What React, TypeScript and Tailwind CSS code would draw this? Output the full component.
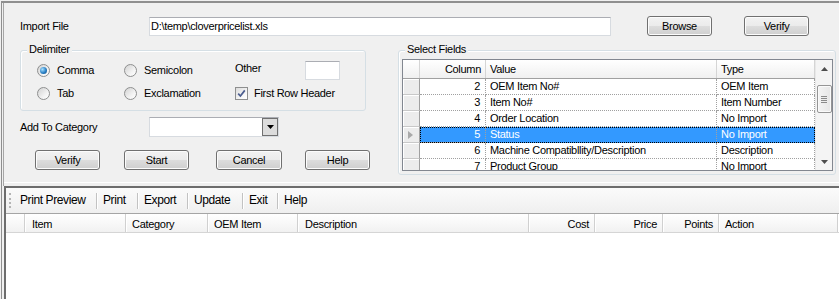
import React from "react";

type FieldRow = { column: number; value: string; type: string; selected?: boolean };

const fieldRows: FieldRow[] = [
  { column: 2, value: "OEM Item No#", type: "OEM Item" },
  { column: 3, value: "Item No#", type: "Item Number" },
  { column: 4, value: "Order Location", type: "No Import" },
  { column: 5, value: "Status", type: "No Import", selected: true },
  { column: 6, value: "Machine Compatibllity/Description", type: "Description" },
  { column: 7, value: "Product Group", type: "No Import" },
];

const toolbarItems = [
  { label: "Print Preview", className: "w-[76px]" },
  { label: "Print", className: "w-[40px] pl-[6px]" },
  { label: "Export", className: "w-[49px] pl-[6px]" },
  { label: "Update", className: "w-[54px] pl-[6px]" },
  { label: "Exit", className: "w-[34px] pl-[6px]" },
  { label: "Help", className: "pl-[6px]" },
];

const itemColumns = [
  { label: "", className: "w-[20px]" },
  { label: "Item", className: "w-[101px] pl-[6px]" },
  { label: "Category", className: "w-[82px] pl-[5px]" },
  { label: "OEM Item", className: "w-[90px] pl-[5px]" },
  { label: "Description", className: "w-[231px] pl-[6px]" },
  { label: "Cost", className: "w-[66px] justify-end pr-[7px]" },
  { label: "Price", className: "w-[68px] justify-end pr-[7px]" },
  { label: "Points", className: "w-[56px] justify-end pr-[7px]" },
  { label: "Action", className: "flex-1 pl-[5px]" },
];

function WinButton({ label, className = "" }: { label: string; className?: string }) {
  return (
    <button
      className={`flex h-[20px] shrink-0 items-center justify-center rounded-[3px] border border-[#707070] bg-[linear-gradient(#f2f2f2,#ebebeb_50%,#dddddd_50%,#cfcfcf)] shadow-[inset_0_0_0_1px_#fcfcfc] text-black ${className}`}
    >
      {label}
    </button>
  );
}

function Radio({ checked }: { checked?: boolean }) {
  return (
    <span className="flex h-[13px] w-[13px] shrink-0 items-center justify-center rounded-full border border-[#8e8f8f] bg-[linear-gradient(135deg,#d2d2d2,#f4f4f4_65%,#ffffff)]">
      {checked && (
        <span className="h-[7px] w-[7px] rounded-full bg-[radial-gradient(circle_at_35%_35%,#a6e0ff,#2a7fc4_55%,#0b4a80)]" />
      )}
    </span>
  );
}

function Checkbox() {
  return (
    <span className="flex h-[13px] w-[13px] shrink-0 items-center justify-center border border-[#8e8f8f] bg-[linear-gradient(135deg,#dcdcdc,#f8f8f8_70%,#ffffff)]">
      <svg width="9" height="9" viewBox="0 0 9 9">
        <path d="M1.2 4.6 L3.4 7 L7.8 1.4" fill="none" stroke="#4b5d8f" strokeWidth="1.7" />
      </svg>
    </span>
  );
}

function GroupBox({
  title,
  className = "",
  children,
}: {
  title: string;
  className?: string;
  children: React.ReactNode;
}) {
  return (
    <div className={`relative shrink-0 rounded-[3px] border border-[#d5dfe5] shadow-[inset_1px_1px_0_#ffffff] ${className}`}>
      <span className="absolute -top-[8px] left-[6px] bg-[#f0f0f0] px-[2px] leading-[13px]">{title}</span>
      {children}
    </div>
  );
}

function SelectFieldsGrid() {
  const headerCell =
    "flex h-full items-center bg-[linear-gradient(#ffffff,#f0f0f0)] shadow-[inset_-1px_0_0_#d5d5d5]";
  return (
    <div className="flex h-[112px] w-[431px] border border-[#828790] bg-white">
      <div className="w-[412px] overflow-hidden">
        <div className="flex h-[19px] border-b border-[#a0a0a0]">
          <div className={`${headerCell} w-[17px]`} />
          <div className={`${headerCell} w-[66px] justify-end pr-[5px]`}>Column</div>
          <div className={`${headerCell} w-[231px] pl-[4px]`}>Value</div>
          <div className={`${headerCell} w-[98px] pl-[4px]`}>Type</div>
        </div>
        {fieldRows.map((r) => (
          <div key={r.column} className="flex h-[16px]">
            <div className="flex w-[17px] items-center border-r border-b border-r-[#a0a0a0] border-b-[#c8c8c8] bg-[#ececec] pl-[5px] shadow-[inset_1px_1px_0_#ffffff]">
              {r.selected && (
                <svg width="5" height="8" viewBox="0 0 5 8">
                  <path d="M0 0 L5 4 L0 8 Z" fill="#a9a9a9" />
                </svg>
              )}
            </div>
            <div
              className={`flex ${
                r.selected
                  ? "bg-[#3399ff] text-white outline-1 -outline-offset-1 outline-dotted outline-black"
                  : ""
              }`}
            >
              <div className="flex w-[66px] items-center justify-end border-r border-b border-dotted border-[#a0a0a0] pr-[5px]">
                {r.column}
              </div>
              <div className="flex w-[231px] items-center border-r border-b border-dotted border-[#a0a0a0] pl-[4px] whitespace-nowrap">
                {r.value}
              </div>
              <div className="flex w-[98px] items-center border-r border-b border-dotted border-[#a0a0a0] pl-[4px] whitespace-nowrap">
                {r.type}
              </div>
            </div>
          </div>
        ))}
      </div>
      <div className="flex w-[17px] flex-col items-center border-l border-[#e8e8e8] bg-[#f4f4f4]">
        <div className="flex h-[17px] items-center">
          <svg width="7" height="4" viewBox="0 0 7 4">
            <path d="M0 4 L3.5 0 L7 4 Z" fill="#4d4d4d" />
          </svg>
        </div>
        <div className="mt-[8px] flex h-[28px] w-[15px] flex-col items-center justify-center gap-[1px] rounded-[2px] border border-[#959595] bg-[linear-gradient(90deg,#f4f4f4,#e6e6e6)] shadow-[inset_0_0_0_1px_#fafafa]">
          <span className="h-px w-[6px] bg-[#8a8a8a]" />
          <span className="h-px w-[6px] bg-[#8a8a8a]" />
          <span className="h-px w-[6px] bg-[#8a8a8a]" />
          <span className="h-px w-[6px] bg-[#8a8a8a]" />
        </div>
        <div className="mt-auto flex h-[17px] items-center">
          <svg width="7" height="4" viewBox="0 0 7 4">
            <path d="M0 0 L7 0 L3.5 4 Z" fill="#4d4d4d" />
          </svg>
        </div>
      </div>
    </div>
  );
}

export default function App() {
  return (
    <div className="flex h-[299px] w-[839px] flex-col overflow-hidden bg-[#f0f0f0] pt-px pl-px font-['Liberation_Sans',Arial,sans-serif] text-[11px] leading-[13px] tracking-[-0.3px] text-black">
      <div className="flex flex-1 flex-col border-t-2 border-l border-[#8f8f8f]">
        {/* import form */}
        <div className="ml-px flex h-[183px] flex-col border-l border-[#a6a6a6] pt-[13px]">
          <div className="flex items-start pl-[16px]">
            <span className="flex h-[20px] w-[129px] shrink-0 items-center">Import File</span>
            <div className="mt-px flex h-[19px] w-[462px] shrink-0 items-center border border-[#d7dbe0] border-t-[#abadb3] bg-white pl-[1px]">
              D:\temp\cloverpricelist.xls
            </div>
            <WinButton label="Browse" className="ml-[36px] w-[65px]" />
            <WinButton label="Verify" className="ml-[32px] w-[65px]" />
          </div>

          <div className="mt-[14px] flex items-start pl-[16px]">
            <div className="flex w-[346px] shrink-0 flex-col">
              <GroupBox title="Delimiter" className="h-[61px] w-[346px] pt-[9px] pl-[16px]">
                <div className="grid grid-cols-[87px_111px_1fr] grid-rows-[20px_20px] gap-y-[3px]">
                  <label className="flex items-center gap-[7px]">
                    <Radio checked />
                    Comma
                  </label>
                  <label className="flex items-center gap-[7px]">
                    <Radio />
                    Semicolon
                  </label>
                  <div className="flex items-center">
                    <span className="mb-[3px] w-[70px]">Other</span>
                    <div className="h-[19px] w-[35px] border border-[#d7dbe0] border-t-[#abadb3] bg-white" />
                  </div>
                  <label className="flex items-center gap-[7px]">
                    <Radio />
                    Tab
                  </label>
                  <label className="flex items-center gap-[7px]">
                    <Radio />
                    Exclamation
                  </label>
                  <label className="flex items-center gap-[6px]">
                    <Checkbox />
                    First Row Header
                  </label>
                </div>
              </GroupBox>

              <div className="mt-[6px] flex h-[20px] items-center">
                <span className="w-[129px] shrink-0">Add To Category</span>
                <div className="flex h-[20px] w-[130px] shrink-0 justify-end border border-[#d7dbe0] border-t-[#abadb3] bg-white">
                  <div className="flex w-[16px] items-center justify-center border border-[#707070] bg-[#dcdcdc]">
                    <svg width="7" height="4" viewBox="0 0 7 4">
                      <path d="M0 0 L7 0 L3.5 4 Z" fill="#000000" />
                    </svg>
                  </div>
                </div>
              </div>

              <div className="mt-[13px] flex pl-[15px]">
                <WinButton label="Verify" className="w-[65px]" />
                <WinButton label="Start" className="ml-[24px] w-[65px]" />
                <WinButton label="Cancel" className="ml-[27px] w-[66px]" />
                <WinButton label="Help" className="ml-[23px] w-[65px]" />
              </div>
            </div>

            <GroupBox title="Select Fields" className="ml-[32px] h-[125px] w-[438px] pt-[8px] pl-[3px]">
              <SelectFieldsGrid />
            </GroupBox>
          </div>

          <div className="mt-auto mb-[3px] h-px bg-white" />
        </div>

        {/* item list */}
        <div className="ml-[2px] flex flex-1 flex-col border-t-2 border-l-2 border-[#6d6d6d] bg-white">
          <div className="flex h-[26px] items-center border-b border-[#a5a5a5] bg-[linear-gradient(#fbfbfb,#efefef)] text-[12px] tracking-[-0.4px]">
            <span className="ml-[3px] h-[15px] border-l-2 border-dotted border-[#b4b4b4]" />
            <div className="ml-[9px] flex items-center">
              {toolbarItems.map((t, i) => (
                <React.Fragment key={t.label}>
                  {i > 0 && <span className="h-[16px] w-px bg-[#c2c2c2] shadow-[1px_0_0_#ffffff]" />}
                  <span className={t.className}>{t.label}</span>
                </React.Fragment>
              ))}
            </div>
          </div>
          <div className="flex h-[19px] border-b border-[#d5d5d5] bg-[linear-gradient(#ffffff,#f1f1f1)]">
            {itemColumns.map((c, i) => (
              <div
                key={i}
                className={`flex h-full items-center pt-[3px] shadow-[inset_-1px_0_0_#ffffff,inset_-2px_0_0_#d0d0d0] ${c.className}`}
              >
                {c.label}
              </div>
            ))}
          </div>
          <div className="flex-1 bg-white" />
        </div>
      </div>
    </div>
  );
}
